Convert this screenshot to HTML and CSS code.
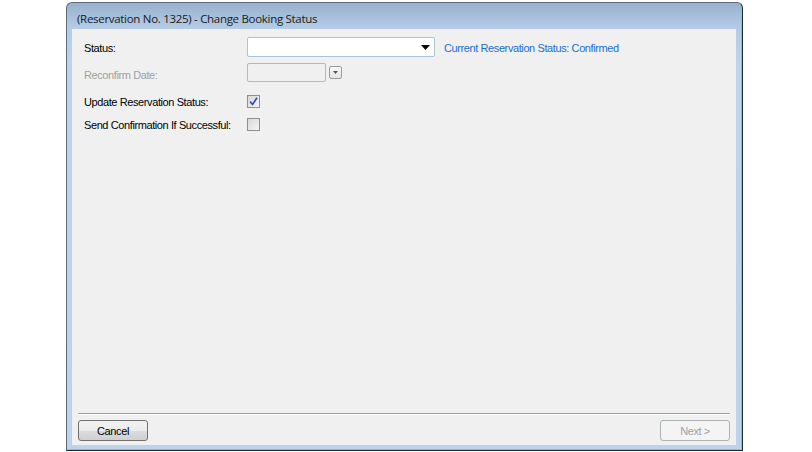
FILE: index.html
```html
<!DOCTYPE html>
<html>
<head>
<meta charset="utf-8">
<link rel="stylesheet" href="styles.css">
</head>
<body>
<div class="window">
  <div class="titlebar"><span class="title">(Reservation No. 1325) - Change Booking Status</span></div>
  <div class="client">
    <div class="form">
      <div class="row row-status">
        <label class="label">Status:</label>
        <div class="combo">
          <svg class="combo-arrow" width="9" height="5" viewBox="0 0 9 5"><path d="M0 0 H9 L4.5 5 Z" fill="#000"/></svg>
        </div>
        <span class="current">Current Reservation Status: Confirmed</span>
      </div>
      <div class="row row-date">
        <label class="label disabled">Reconfirm Date:</label>
        <div class="datebox"></div>
        <div class="datebtn"><svg width="5" height="3" viewBox="0 0 5 3"><path d="M0 0 H5 L2.5 3 Z" fill="#555"/></svg></div>
      </div>
      <div class="row row-check">
        <label class="label">Update Reservation Status:</label>
        <div class="checkbox"><svg width="9" height="9" viewBox="0 0 9 9"><path d="M1 4.5 L3.5 7.5 L8 0.8" fill="none" stroke="#2a4fa8" stroke-width="1.6"/></svg></div>
      </div>
      <div class="row row-check2">
        <label class="label">Send Confirmation If Successful:</label>
        <div class="checkbox"></div>
      </div>
    </div>
    <div class="footer">
      <div class="separator"></div>
      <div class="buttons">
        <button class="btn">Cancel</button>
        <button class="btn btn-disabled">Next &gt;</button>
      </div>
    </div>
  </div>
</div>
</body>
</html>
```

FILE: styles.css
```css
html, body {
  margin: 0;
  padding: 0;
  background: #ffffff;
}
body {
  width: 812px;
  height: 452px;
  overflow: hidden;
}
.window {
  margin: 2px 0 0 66px;
  width: 675px;
  height: 447px;
  border: 1px solid #5d6b78;
  border-right-color: #1e2a33;
  border-bottom-color: #1e2a33;
  border-radius: 6px 6px 0 0;
  background: linear-gradient(to bottom, #97b1cf 0px, #b3cbe5 24px, #bed4ec 60px, #bcd3ea 100%);
  display: flex;
  flex-direction: column;
  box-shadow: inset -1px 0 0 #5fd0ef, inset 0 -1px 0 #5fd0ef;
}
.titlebar {
  height: 26px;
  display: flex;
  align-items: center;
  padding-left: 10px;
}
.title {
  font-family: "Open Sans", sans-serif;
  font-size: 11.5px;
  color: #1a1a1a;
  letter-spacing: -0.3px;
  margin-top: 5px;
}
.client {
  flex: 1;
  margin: 0 6px 5px 5px;
  background: #f0f0f0;
  display: flex;
  flex-direction: column;
  font-family: "Liberation Sans", Arial, sans-serif;
  font-size: 11px;
  letter-spacing: -0.4px;
  color: #000;
}
.form {
  flex: 1;
  padding: 8px 0 0 12px;
}
.row {
  display: flex;
  align-items: center;
}
.label {
  width: 163px;
  flex: none;
  padding-top: 1px;
}
.disabled {
  color: #a0a0a0;
  padding-top: 4px;
}
.row-status { height: 20px; }
.combo {
  width: 182px;
  height: 18px;
  border: 1px solid #a9c3dc;
  border-radius: 2px;
  background: #fff;
  display: flex;
  align-items: center;
  justify-content: flex-end;
  padding-right: 4px;
  box-sizing: content-box;
}
.current {
  color: #1a6fd0;
  margin-left: 9px;
  padding-top: 1px;
}
.row-date {
  height: 19px;
  margin-top: 6px;
}
.datebox {
  width: 77px;
  height: 17px;
  border: 1px solid #b8b8b8;
  border-radius: 2px;
  background: #f0f0f0;
}
.datebtn {
  width: 11px;
  height: 11px;
  margin-left: 3px;
  border: 1px solid #9a9a9a;
  border-radius: 2px;
  background: linear-gradient(#fafafa, #e4e4e4);
  display: flex;
  align-items: center;
  justify-content: center;
}
.row-check {
  height: 14px;
  margin-top: 12px;
}
.row-check2 {
  height: 14px;
  margin-top: 9px;
}
.checkbox {
  width: 11px;
  height: 11px;
  border: 1px solid #8e8f8f;
  background: linear-gradient(135deg, #d8d8d8, #f4f4f4);
  display: flex;
  align-items: center;
  justify-content: center;
}
.footer {
  padding: 0 6px 4px 6px;
}
.separator {
  height: 1px;
  background: #a0a0a0;
  border-bottom: 1px solid #ffffff;
}
.buttons {
  display: flex;
  justify-content: space-between;
  margin-top: 5px;
}
.btn {
  width: 70px;
  height: 21px;
  border: 1px solid #707070;
  border-radius: 3px;
  background: linear-gradient(#f2f2f2 0%, #ebebeb 50%, #dddddd 51%, #cfcfcf 100%);
  font-family: "Liberation Sans", Arial, sans-serif;
  font-size: 11px;
  letter-spacing: -0.4px;
  color: #000;
  padding: 0;
}
.btn-disabled {
  border-color: #adb2b5;
  background: #f4f4f4;
  color: #a0a0a0;
}
```
